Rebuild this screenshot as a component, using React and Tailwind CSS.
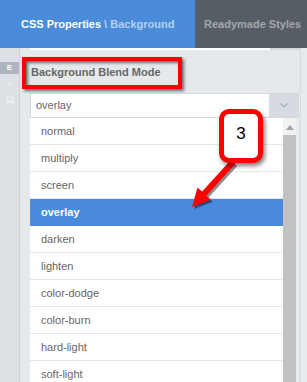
import React from 'react';

const modes = ['normal', 'multiply', 'screen', 'overlay', 'darken', 'lighten', 'color-dodge', 'color-burn', 'hard-light', 'soft-light'];

const App = () => {
    return (
        <div className="relative w-[307px] h-[382px] overflow-hidden bg-[#e6e9ec] font-['Liberation_Sans',Arial,sans-serif]">
            {/* Tabs */}
            <div className="flex h-[48px]">
                <div className="w-[195px] bg-[#4a8bda] flex items-center pl-[21px] text-[11px] font-bold">
                    <span className="text-white">CSS Properties</span>
                    <span className="text-[#b5d0f0] ml-[3px]">\ Background</span>
                </div>
                <div className="flex-1 bg-[#575d64] flex items-center pl-[9px] text-[11px] font-bold text-[#a3a7ab]">
                    Readymade Styles
                </div>
            </div>

            <div className="flex h-[334px]">
                {/* Sidebar */}
                <div className="w-[20px] bg-[#dde1e5] border-r border-[#cfd4d9] flex flex-col items-center pt-[14px]">
                    <div className="w-[19px] h-[12px] bg-[#adb5be] text-white text-[8px] font-bold flex items-center justify-center">E</div>
                    <div className="mt-[5px] text-[8px] font-bold text-[#f4f5f6]">!</div>
                    <svg className="mt-[5px]" width="10" height="8" viewBox="0 0 10 8">
                        <rect x="2" y="1" width="6" height="4" fill="none" stroke="#f2f3f4" strokeWidth="1" />
                        <rect x="0.5" y="6" width="9" height="1.2" fill="#f2f3f4" />
                    </svg>
                </div>

                {/* Main */}
                <div className="w-[280px] pl-[10px]">
                    <div className="flex h-[2px]">
                        <div className="w-[240px] bg-white" />
                        <div className="w-[30px] bg-[#d3d8dd]" />
                    </div>
                    <div className="relative h-[43px] flex items-center pl-[1px] pt-[2px]">
                        <span className="text-[11px] font-bold text-[#666]">Background Blend Mode</span>
                        <div className="absolute left-[-8px] top-[7px] w-[160px] h-[32px] border-[4px] border-[#ff0000] shadow-[2px_2px_3px_rgba(0,0,0,0.55),inset_2px_2px_3px_rgba(0,0,0,0.55)]" />
                    </div>
                    <div className="flex h-[25px] bg-white border border-[#d4d9de] mr-[1px]">
                        <div className="flex-1 flex items-center pl-[5px] text-[11px] text-[#666]">overlay</div>
                        <div className="w-[29px] bg-[#d5dbe0] flex items-center justify-center">
                            <svg width="8" height="5" viewBox="0 0 8 5">
                                <path d="M0.5 0.5 L4 4 L7.5 0.5" fill="none" stroke="#a4adb6" strokeWidth="1.2" />
                            </svg>
                        </div>
                    </div>
                    <div className="flex h-[270px]">
                        <div className="w-[253px] bg-white">
                            {modes.map((m) => (
                                <div
                                    key={m}
                                    className={m === 'overlay'
                                        ? 'h-[27px] flex items-center pl-[11px] text-[11px] bg-[#4a89dc] text-white font-bold'
                                        : 'h-[27px] flex items-center pl-[11px] text-[11px] text-[#666] border-b border-[#e4e7ea]'}
                                >
                                    {m}
                                </div>
                            ))}
                        </div>
                        <div className="w-[15px] bg-[#f1f1f1] flex flex-col items-center pt-[7px] border-r-2 border-[#e9ebed]">
                            <svg width="8" height="5" viewBox="0 0 8 5">
                                <path d="M0 5 L4 0 L8 5 Z" fill="#a3a3a3" />
                            </svg>
                            <div className="mt-[5px] w-[13px] flex-1 bg-[#c1c1c1]" />
                        </div>
                    </div>
                </div>

                {/* Right edge */}
                <div className="flex-1 border-l border-[#d6dadf] bg-[#e8ebee]" />
            </div>

            {/* Callout 3 */}
            <div className="absolute left-[219px] top-[109px] w-[44px] h-[54px] border-[5px] border-[#ff0000] rounded-[10px] bg-white flex justify-center pt-[11px] shadow-[2px_3px_4px_rgba(0,0,0,0.5)] z-10">
                <span className="text-[17px] leading-none text-black font-normal">3</span>
            </div>
            <svg className="absolute left-0 top-0 pointer-events-none" width="307" height="382" viewBox="0 0 307 382">
                <g transform="translate(2,2)" opacity="0.45">
                    <line x1="233" y1="162" x2="203" y2="195" stroke="#000" strokeWidth="6" />
                    <path d="M192 207 L210.8 199.8 L197.5 187.6 Z" fill="#000" />
                </g>
                <line x1="233" y1="162" x2="203" y2="195" stroke="#ff0000" strokeWidth="6" />
                <path d="M192 207 L210.8 199.8 L197.5 187.6 Z" fill="#ff0000" />
            </svg>
        </div>
    );
};

export default App;
